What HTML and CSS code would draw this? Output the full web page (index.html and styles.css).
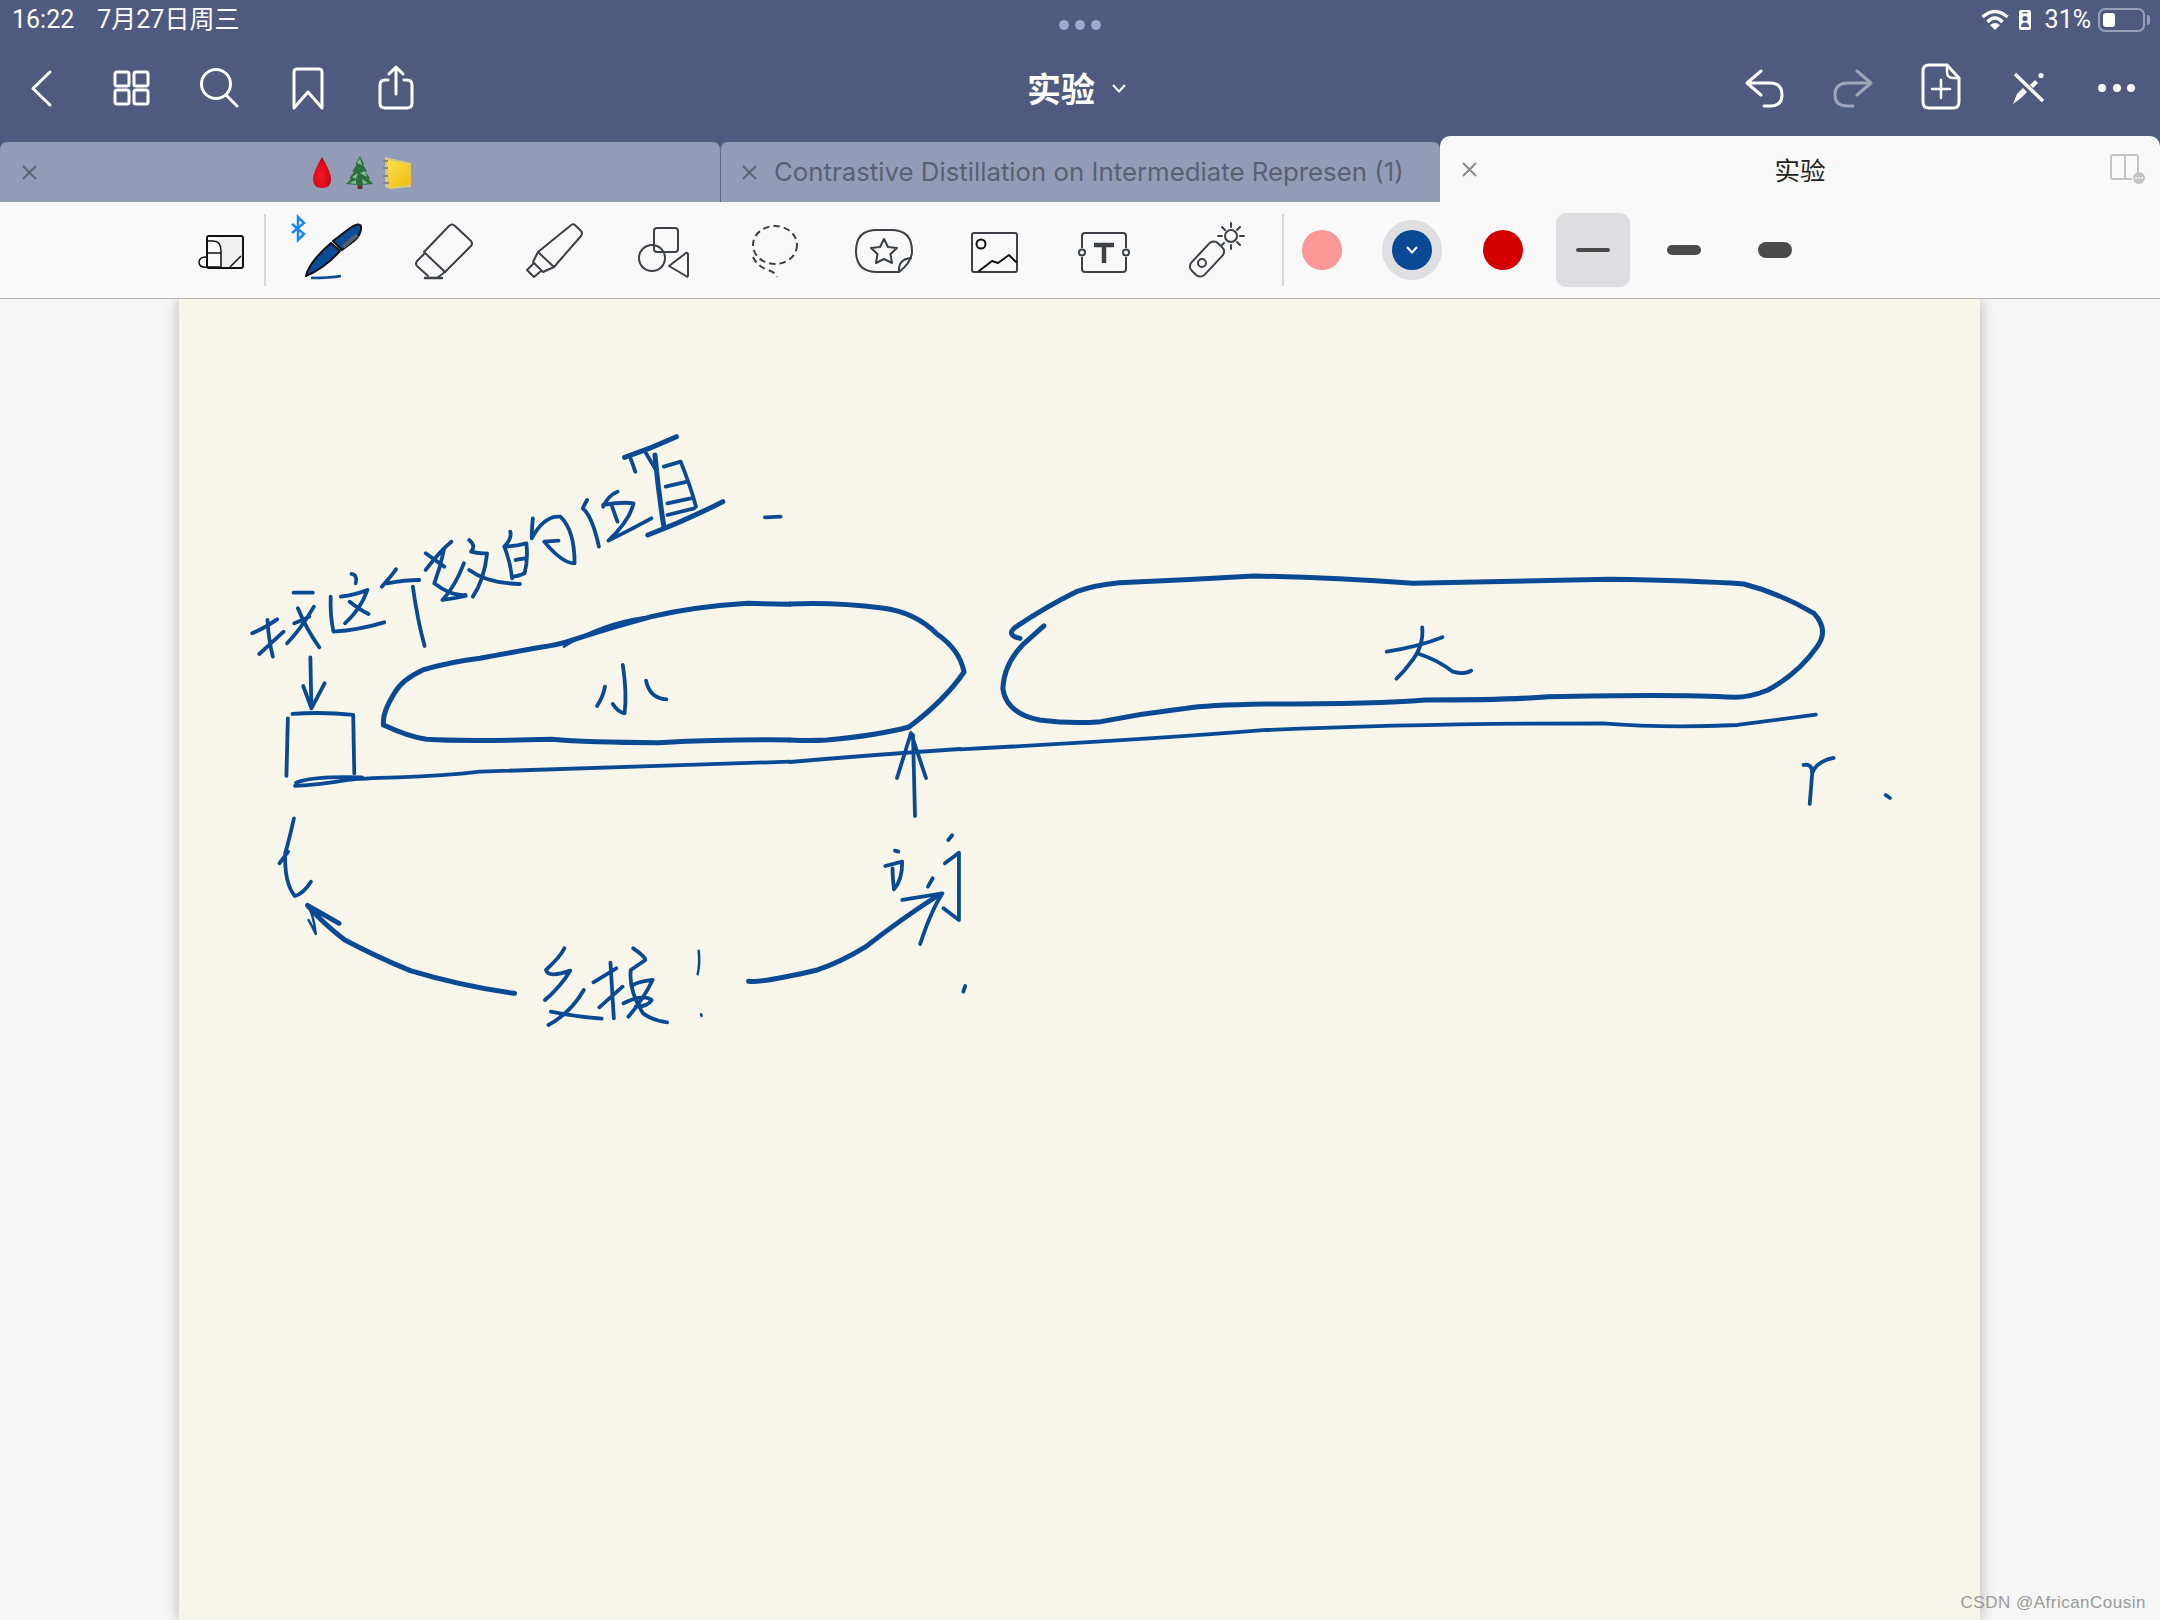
FILE: index.html
```html
<!DOCTYPE html>
<html lang="zh">
<head>
<meta charset="utf-8">
<title>实验</title>
<link rel="stylesheet" href="styles.css">
</head>
<body>
<div class="app">
  <header class="chrome">
    <div class="status">
      <div class="status-left"><span>16:22</span><span>7月27日周三</span></div>
      <div class="grip"><i></i><i></i><i></i></div>
      <div class="status-right">
        <svg class="st-wifi" viewBox="1979 8 28 24"><path d="M1980.500 17 Q1993 6 2005.500 17" /><path d="M1985.500 22 Q1993 14 2000.500 22" /><path d="M1993 30 L1988 25 Q1993 21 1998 25 Z" class="solid"/></svg>
        <svg class="st-phone" viewBox="2017 10 12 20"><rect x="2017" y="10" width="12" height="20" rx="2" fill="#fff"/><rect x="2020.500" y="12" width="5" height="1.400" fill="#4e5b7f"/><circle cx="2023" cy="18.500" r="2.600" fill="#4e5b7f"/><path d="M2019 27 Q2019 22.500 2023 22.500 Q2027 22.500 2027 27 Z" fill="#4e5b7f"/></svg>
        <span class="pct">31%</span>
        <div class="battery"><div class="battery-fill"></div></div>
      </div>
    </div>
    <div class="nav">
      <div class="nav-group">
        <svg class="nav-icon" viewBox="22 64 44 48"><path d="M50 72 L33 88.500 L50 105"/></svg>
        <svg class="nav-icon" viewBox="110 64 44 48"><rect x="115" y="72" width="14" height="14" rx="2"/><rect x="134" y="72" width="14" height="14" rx="2"/><rect x="115" y="90" width="14" height="14" rx="2"/><rect x="134" y="90" width="14" height="14" rx="2"/></svg>
        <svg class="nav-icon" viewBox="198 64 44 48"><circle cx="216" cy="84" r="14.500"/><path d="M226 95 L237 106"/></svg>
        <svg class="nav-icon" viewBox="286 64 44 48"><path d="M294 72 Q294 69 297 69 H319 Q322 69 322 72 V108 L308 92 L294 108 Z"/></svg>
        <svg class="nav-icon" viewBox="374 64 44 48"><path d="M388 80 H385 Q380 80 380 85 V103 Q380 108 385 108 H407 Q412 108 412 103 V85 Q412 80 407 80 H404"/><path d="M396 94 V67 M389 74 L396 67 L403 74"/></svg>
      </div>
      <div class="doc-title"><span>实验</span><svg class="title-chevron" viewBox="0 0 14 9"><path d="M1 1 L7 7.500 L13 1"/></svg></div>
      <div class="nav-group nav-group-right">
        <svg class="nav-icon" viewBox="1743 64 44 48"><path d="M1761 71 L1747 83 L1761 95 M1747 83 H1770 Q1782 83 1782 95 Q1782 106 1770 106 H1764"/></svg>
        <svg class="nav-icon nav-icon-off" viewBox="1831 64 44 48"><path d="M1857 71 L1871 83 L1857 95 M1871 83 H1848 Q1835 83 1835 95 Q1835 106 1848 106 H1853"/></svg>
        <svg class="nav-icon" viewBox="1919 64 44 48"><path d="M1929 65 H1947 L1959 78 V102 Q1959 108 1953 108 H1929 Q1923 108 1923 102 V71 Q1923 65 1929 65 Z"/><path d="M1947 65 V72 Q1947 78 1953 78 H1959 M1932 89 H1950 M1941 80 V98" class="fine"/></svg>
        <svg class="nav-icon" viewBox="2007 64 44 48"><path d="M2015 74 L2043 101" class="bold"/><path d="M2013 104 L2017 94 L2023 88 L2027 92 L2021 98 Z" class="solid"/><path d="M2030 85 L2035 80 L2038 83 L2033 88 Z" class="solid"/><circle cx="2041" cy="75.500" r="2.600" class="solid"/></svg>
        <svg class="nav-icon" viewBox="2095 64 44 48"><circle cx="2102" cy="88" r="4" class="solid"/><circle cx="2117" cy="88" r="4" class="solid"/><circle cx="2131" cy="88" r="4" class="solid"/></svg>
      </div>
    </div>
    <div class="tabs">
      <div class="tab">
        <svg class="tab-x" viewBox="0 0 15 15"><path d="M1 1 L14 14 M14 1 L1 14"/></svg>
        <div class="tab-label tab-label-center tab-label-emoji">
          <svg class="emoji" viewBox="312 155 100 33">
            <defs>
              <radialGradient id="dropfill" cx=".45" cy=".6" r=".6"><stop offset="0" stop-color="#ef1a24"/><stop offset=".75" stop-color="#d90a14"/><stop offset="1" stop-color="#9e0008"/></radialGradient>
              <linearGradient id="notefill" x1="0" y1="0" x2="1" y2="1"><stop offset="0" stop-color="#fde44e"/><stop offset="1" stop-color="#efb90e"/></linearGradient>
            </defs>
            <path d="M322 156 Q331 171 331 178 Q331 187 322 187 Q313 187 313 178 Q313 171 322 156 Z" fill="url(#dropfill)"/>
            <rect x="357.500" y="182" width="5" height="6" fill="#5e3f22"/>
            <path d="M360 155 L364 163 L363 164 L367 170 L365.500 171 L370 177 L368.500 178 L373 183 L362 184 H358 L346 183 L351 178 L349.500 177 L354 171 L352.500 170 L356.500 164 L355.500 163 Z" fill="#2c6e3e"/>
            <path d="M360 157 L362 164 L357 162 Z M365 170 L367 176 L360 172 Z M352 176 L358 172 L356 178 Z M368 182 L362 178 L363 183 Z M349 182 L356 179 L356 183 Z" fill="#86b992"/>
            <path d="M385 156 L411 162 V186 L390 188 L385 186 Z" fill="#d8c87a"/>
            <path d="M387 159 L410 163 L411 183 L390 187 Z" fill="url(#notefill)"/>
            <path d="M383 160 H388 M383 167 H388 M383 175 H388 M383 182 H389" stroke="#8a8a74" stroke-width="2" fill="none"/>
          </svg>
        </div>
      </div>
      <div class="tab tab-divided">
        <svg class="tab-x" viewBox="0 0 15 15"><path d="M1 1 L14 14 M14 1 L1 14"/></svg>
        <div class="tab-label tab-label-text">Contrastive Distillation on Intermediate Represen (1)</div>
      </div>
      <div class="tab tab-active">
        <svg class="tab-x" viewBox="0 0 15 15"><path d="M1 1 L14 14 M14 1 L1 14"/></svg>
        <div class="tab-label tab-label-center tab-label-active">实验</div>
        <svg class="tab-split" viewBox="2110 155 35 30">
          <path d="M2138 174 V158 Q2138 156 2136 156 H2113 Q2111 156 2111 158 V178 Q2111 180 2113 180 H2132 M2125 156 V180" fill="none" stroke="#c4c4c6" stroke-width="2"/>
          <circle cx="2139" cy="179" r="6" fill="#c4c4c6"/>
          <circle cx="2136" cy="179" r="1" fill="#f9f9f9"/><circle cx="2139" cy="179" r="1" fill="#f9f9f9"/><circle cx="2142" cy="179" r="1" fill="#f9f9f9"/>
        </svg>
      </div>
    </div>
    <div class="toolbar">
      <svg class="tool tool-layers" viewBox="204 215 40 70">
        <rect x="207" y="236" width="36" height="32" rx="2" fill="#f0f0f0" stroke="#111" stroke-width="2"/>
        <path d="M208 237 H214 Q221 238 221 250 V267 H208 Z" fill="#fafafa"/>
        <path d="M230 267 L241 256 M221 268 V251 Q221 241 213 241 H207 M206 253 H221 M207 257 Q199 257 199 262 Q199 268 207 267 H221" fill="none" stroke="#111" stroke-width="1.500"/>
      </svg>
      <span class="tool-sep tool-sep-first"></span>
      <svg class="tool tool-pen" viewBox="298 215 70 70">
        <path d="M292 224 L304 234 L298 240 V217 L304 223 L292 233" fill="none" stroke="#1a84ff" stroke-width="2.500"/>
        <path d="M306 276 Q309 262 331 243 L340 251 Q325 268 306 276 Z" fill="#0a4a96" stroke="#111" stroke-width="2" stroke-linejoin="round"/>
        <path d="M333 241 L350 228 Q359 222 361 226 Q362 234 354 241 L342 250 Z" fill="#0a4a96" stroke="#111" stroke-width="2" stroke-linejoin="round"/>
        <path d="M343 247 L357 235" stroke="#56606c" stroke-width="4" fill="none"/>
        <path d="M311 278 Q330 278 341 276" stroke="#0a4a96" stroke-width="2.500" fill="none"/>
      </svg>
      <svg class="tool tool-line" viewBox="408 215 70 70">
        <path d="M424 252 L449 226 Q452 223 455 226 L471 241 Q473 244 471 246 L445 272 Z"/>
        <path d="M424 254 L417 261 Q415 264 417 266 L428 276 M445 272 L437 278"/>
        <path d="M425 278 H442" stroke-width="2.500"/>
      </svg>
      <svg class="tool tool-line" viewBox="518 215 70 70">
        <path d="M538 252 L570 226 Q573 223 575 225 L581 231 Q583 233 581 236 L554 267 Z"/>
        <path d="M538 252 L533 262 L543 272 L554 267 M533 264 L527 270 L534 277 L541 271"/>
      </svg>
      <svg class="tool tool-line" viewBox="628 215 70 70">
        <rect x="654" y="228" width="24" height="24" rx="3"/>
        <circle cx="652" cy="258" r="13"/>
        <path d="M669 266 L686 253 Q688 252 688 255 V275 Q688 278 686 276 Z"/>
      </svg>
      <svg class="tool tool-line tool-butt" viewBox="738 215 70 70">
        <ellipse cx="775" cy="245" rx="22" ry="19" stroke-dasharray="6.500 4"/>
        <path d="M753 257 Q757 266 768 270 Q775 272 777 277" stroke-dasharray="6.500 4"/>
      </svg>
      <svg class="tool tool-line" viewBox="848 215 70 70">
        <path d="M877 230 H891 Q912 230 912 251 Q912 262 899 272 H877 Q856 272 856 251 Q856 230 877 230 Z"/>
        <path d="M899 272 Q898 259 911 258"/>
        <path d="M884 239 L888 247 L897 248 L890.500 254 L892 263 L884 259 L876 263 L877.500 254 L871 248 L880 247 Z"/>
      </svg>
      <svg class="tool tool-line" viewBox="958 215 70 70">
        <rect x="972" y="233" width="45" height="39" rx="2"/>
        <circle cx="981" cy="244" r="4.500" stroke="#111"/>
        <path d="M979 271 L992 261 L998 263 L1009 255 L1016 262" stroke="#111"/>
      </svg>
      <svg class="tool tool-line tool-butt" viewBox="1068 215 70 70">
        <path d="M1082 248 V236 Q1082 233 1085 233 H1123 Q1126 233 1126 236 V248 M1082 257 V269 Q1082 272 1085 272 H1123 Q1126 272 1126 269 V257"/>
        <circle cx="1082" cy="252.500" r="3"/>
        <circle cx="1126" cy="252.500" r="3"/>
        <path d="M1094 245 H1114 M1104 245 V263" stroke-width="4.500"/>
      </svg>
      <svg class="tool tool-line" viewBox="1178 215 70 70">
        <rect x="1188" y="250" width="38" height="18" rx="6" transform="rotate(-47 1207 259)"/>
        <circle cx="1202" cy="263" r="4"/>
        <circle cx="1231" cy="236" r="6"/>
        <path d="M1231 223 V227 M1231 245 V249 M1218 236 H1222 M1240 236 H1244 M1222 227 L1225 230 M1237 230 L1240 227 M1237 242 L1240 245 M1222 245 L1224 243"/>
      </svg>
      <span class="tool-sep tool-sep-second"></span>
      <div class="swatch"><span class="dot dot-pink"></span></div>
      <div class="swatch swatch-current">
        <span class="dot dot-navy"><svg class="dot-chevron" viewBox="0 0 12 8"><path d="M1 1 L6 6.500 L11 1"/></svg></span>
      </div>
      <div class="swatch"><span class="dot dot-red"></span></div>
      <div class="width-opts">
        <div class="width-opt width-opt-on"><span class="bar bar-s"></span></div>
        <div class="width-opt"><span class="bar bar-m"></span></div>
        <div class="width-opt"><span class="bar bar-l"></span></div>
      </div>
    </div>
  </header>
  <main class="canvas">
    <div class="paper">
      <svg class="ink" viewBox="179 299 1801 1321">
        <g transform="translate(230 420) scale(.3571 .3333)">
          <!-- 找 -->
          <path d="M62 640 Q95 625 132 598 M105 600 Q108 660 120 710 M82 702 Q115 670 150 635 M178 518 L232 518 M160 670 Q200 625 235 560 M180 610 Q205 600 222 590 M190 565 Q215 630 250 682"/>
          <!-- 这 -->
          <path d="M340 462 Q358 465 352 490 M282 530 Q280 590 290 635 Q360 630 432 607 M310 530 Q350 525 385 510 M322 610 Q365 570 385 510 M335 545 Q365 570 388 582"/>
          <!-- 个 -->
          <path d="M425 500 Q450 470 465 448 M440 490 Q490 480 530 480 M512 500 Q525 600 545 678"/>
          <!-- 数 -->
          <path d="M548 400 L600 440 M620 365 Q590 390 548 450 M578 410 L600 385 Q590 440 572 490 Q620 530 660 525 M655 430 Q630 500 595 540 Q630 535 660 528 M670 360 Q690 378 675 395 Q700 402 720 400 Q712 480 680 530 M670 450 Q720 490 812 492"/>
          <!-- 的 -->
          <path d="M785 335 Q790 355 768 380 Q785 425 790 475 M770 380 Q800 378 830 370 Q835 420 825 460 Q805 470 790 470 M800 420 L825 415 M848 295 Q845 330 845 355 Q880 285 925 290 Q965 330 965 430 Q930 430 880 365 L920 362"/>
          <!-- 位 -->
          <path d="M1000 240 Q992 255 988 265 Q1015 290 1033 380 M1045 260 Q1060 225 1085 215 M1070 260 L1085 305 M1045 255 Q1100 245 1130 250 Q1120 300 1060 362 Q1120 330 1180 295"/>
          <!-- 置 -->
          <path class="thick" d="M1105 112 Q1180 85 1250 50 M1190 105 Q1200 220 1215 320 M1170 345 Q1280 300 1380 245"/>
          <path d="M1120 110 L1135 155 M1165 100 L1190 145 M1215 140 L1262 125 Q1290 200 1305 260 M1220 200 L1280 185 M1225 250 L1290 235 M1225 285 L1300 265 M1498 292 L1542 290"/>
          <!-- box, arrow, 小 -->
          <path d="M162 895 L158 1068 M175 882 Q260 875 345 885 L348 1060 M185 1088 Q230 1068 370 1072"/>
          <path d="M225 712 L228 865 M205 798 L228 865 L265 790"/>
          <path d="M1100 735 Q1112 820 1105 880 Q1085 875 1072 852 M1050 800 Q1045 830 1028 858 M1165 782 Q1175 835 1222 838"/>
          <path class="fine" d="M1160 592 Q1040 610 935 680"/>
          <path class="thick" d="M430 915 Q425 880 460 820 Q480 780 540 750 Q620 725 700 715 Q800 695 870 682 Q920 675 960 660 Q1060 625 1180 590 Q1300 560 1450 550 L1568 553"/>
          <path class="thick" d="M430 915 Q500 950 550 958 Q650 965 900 958 Q1000 968 1200 968 Q1400 958 1568 960"/>
          <path d="M182 1098 Q250 1095 330 1080 Q360 1075 470 1072 Q600 1068 700 1055 Q1000 1045 1568 1025"/>
        </g>
        <path class="thick" d="M790 604 Q835 602 882 608 Q915 612 937 634 Q960 650 964 672 Q945 700 909 727 Q880 735 827 740 Q810 741 790 740"/>
        <path d="M790 762 Q870 755 960 749"/>
        <path d="M913 735 L915 816 M897 778 L911 733 L926 778"/>
        <g transform="translate(960 540) scale(.6122 .3333)">
          <path class="thick" d="M98 295 Q75 285 90 262 Q140 200 190 155 Q220 135 260 128 Q370 120 480 108 Q600 112 740 130 Q900 125 1060 118 Q1200 122 1280 132 Q1340 160 1395 220 Q1420 270 1400 320 Q1370 400 1320 450 Q1290 472 1265 472 Q1180 462 960 470 Q900 480 760 480 Q680 492 500 492 Q400 495 370 505 Q300 520 230 545 Q180 552 130 540 Q75 520 70 445 Q72 370 105 310 L137 258"/>
          <path d="M0 628 Q300 600 500 570 Q750 550 1050 550 Q1150 565 1270 555 L1398 524"/>
          <path d="M755 262 Q758 320 735 370 Q725 395 713 416 M697 335 Q750 320 788 292 M750 342 Q780 360 805 395 Q825 405 835 392"/>
          <path d="M1378 675 Q1392 670 1392 700 L1388 792 M1392 700 Q1398 665 1427 654 M1512 765 L1519 774"/>
        </g>
        <g transform="translate(260 780) scale(.4847 .3333)">
          <path d="M70 115 Q60 180 52 220 Q50 310 72 348 Q90 340 105 305 M40 250 L58 215"/>
          <path class="thick" d="M525 640 Q420 620 310 572 Q240 530 175 480 Q130 430 98 376 L163 430"/>
          <path class="fine" d="M98 376 Q110 400 115 462 Q108 440 100 420"/>
          <path d="M628 505 Q620 530 590 570 Q595 595 640 572 Q620 620 588 660 M600 695 Q650 710 705 716 M595 735 Q640 700 668 630"/>
          <path d="M688 607 L735 565 M723 548 L730 715 M700 682 L748 620 M770 505 Q795 530 795 540 L765 570 Q760 630 790 700 Q810 722 840 727 M760 710 Q790 660 810 600 Q780 605 770 615 M750 670 Q790 640 808 660 Q800 680 775 680"/>
          <path class="fine" d="M905 512 Q908 550 903 583 M910 703 L911 708"/>
          <path class="thick" d="M1008 604 Q1030 610 1150 570 Q1200 545 1250 500 Q1320 420 1400 345"/>
          <path d="M1325 360 L1408 340 Q1385 390 1362 492"/>
          <path d="M1310 212 L1317 215 M1290 258 L1325 245 Q1325 300 1308 328 Q1305 290 1305 265 M1428 166 L1420 180 M1413 250 L1442 218 L1442 420 L1410 385 M1388 295 L1378 320 M1455 618 L1451 635"/>
        </g>
      </svg>
    </div>
    <div class="watermark">CSDN @AfricanCousin</div>
  </main>
</div>
</body>
</html>
```
FILE: styles.css
```css
* { box-sizing: border-box; }
html, body { margin: 0; padding: 0; height: 100%; }
body { font-family: Inter, "Noto Sans CJK SC", sans-serif; background: #f6f6f6; overflow: hidden; }
svg { display: block; overflow: visible; flex: none; }

.app { height: 1620px; display: flex; flex-direction: column; }
.chrome { background: #4e5b7f; position: relative; z-index: 2; flex: none; }

.status { height: 40px; display: grid; grid-template-columns: 1fr auto 1fr; align-items: center; color: #fff; padding: 0 15px 0 12px; }
.status-left { display: flex; gap: 23px; font: 25px/40px Roboto, "Noto Sans CJK SC", sans-serif; }
.grip { display: flex; gap: 6px; padding-top: 10px; margin-right: -3px; }
.grip i { width: 10px; height: 10px; border-radius: 50%; background: #9aa9d2; }
.status-right { display: flex; justify-content: flex-end; align-items: center; }
.st-wifi { width: 28px; height: 24px; fill: none; stroke: #fff; stroke-width: 3.5; }
.st-wifi .solid { fill: #fff; stroke: none; }
.st-phone { width: 12px; height: 20px; margin-left: 10px; }
.pct { font: 25px/40px Roboto, sans-serif; margin-left: 14px; margin-right: 1px; }
.battery { width: 47px; height: 24px; margin-left: 6px; border: 2px solid #97a0b8; border-radius: 7px; padding: 3px; position: relative; }
.battery::after { content: ""; position: absolute; right: -7px; top: 5px; width: 3px; height: 10px; background: #97a0b8; border-radius: 0 3px 3px 0; }
.battery-fill { width: 12px; height: 100%; background: #fff; border-radius: 3px; }

.nav { height: 96px; display: grid; grid-template-columns: minmax(0, 1fr) auto minmax(0, 1fr); align-items: center; padding: 0 21px 0 22px; }
.nav-group { display: flex; gap: 44px; }
.nav-group-right { justify-content: flex-end; }
.nav-icon { width: 44px; height: 48px; fill: none; stroke: #fff; stroke-width: 3; stroke-linecap: round; stroke-linejoin: round; }
.nav-icon .solid { fill: #fff; stroke: none; }
.nav-icon .fine { stroke-width: 2.5; }
.nav-icon .bold { stroke-width: 3.5; stroke-linecap: butt; }
.nav-icon-off { stroke: #9ea6b8; }
.doc-title { display: flex; align-items: center; gap: 17px; padding-right: 8px; color: #fff; font: 700 34px/48px "Noto Sans CJK SC", sans-serif; }
.title-chevron { width: 14px; height: 9px; fill: none; stroke: #fff; stroke-width: 2; }

.tabs { height: 66px; display: flex; align-items: flex-end; }
.tab { flex: 0 0 720px; height: 60px; background: #939cb6; border-radius: 7px 7px 0 0; display: flex; align-items: center; padding-left: 22px; }
.tab-divided { border-left: 1px solid #5e6a8a; padding-left: 21px; }
.tab-active { height: 66px; background: #f9f9f9; border-radius: 10px 10px 0 0; padding-right: 15px; }
.tab-x { width: 15px; height: 15px; fill: none; stroke: #5f6577; stroke-width: 2; }
.tab-active .tab-x { stroke: #8a8a8c; }
.tab-label { flex: 1; min-width: 0; }
.tab-label-center { display: flex; justify-content: center; }
.tab-label-emoji { padding-right: 33px; }
.tab-label-text { margin-left: 17px; color: #5a6072; font-size: 25.800px; line-height: 40px; white-space: nowrap; }
.tab-label-active { color: #222; font: 25.500px/40px "Noto Sans CJK SC", sans-serif; padding-left: 13px; }
.emoji { width: 100px; height: 33px; }
.tab-split { width: 35px; height: 30px; }

.toolbar { height: 97px; background: #f9f9f9; border-bottom: 1px solid #b8b8b8; display: flex; align-items: center; padding-left: 204px; }
.tool { width: 70px; height: 70px; margin-right: 40px; }
.tool-layers { width: 40px; margin-right: 0; }
.tool-pen { margin-left: 0; }
.tool-line { fill: none; stroke: #3e3f47; stroke-width: 2; stroke-linejoin: round; stroke-linecap: round; }
.tool-butt { stroke-linecap: butt; }
.tool-sep { width: 2px; height: 72px; background: #d8d8d8; flex: none; }
.tool-sep-first { margin: 0 32px 0 20px; }
.tool-sep-second { margin: 0 8px 0 -6px; }
.swatch { width: 60px; height: 60px; margin-right: 30px; display: flex; align-items: center; justify-content: center; border-radius: 50%; flex: none; }
.swatch-current { background: #dfdfe2; margin-right: 31px; }
.dot { width: 40px; height: 40px; border-radius: 50%; display: flex; align-items: center; justify-content: center; }
.dot-pink { background: #fd9898; }
.dot-navy { background: #0a4a94; }
.dot-red { background: #d40000; }
.dot-chevron { width: 12px; height: 8px; fill: none; stroke: #fff; stroke-width: 2; }
.width-opts { display: flex; gap: 17px; margin-left: -7px; }
.width-opt { width: 74px; height: 74px; display: flex; align-items: center; justify-content: center; border-radius: 10px; }
.width-opt-on { background: #dedee0; }
.bar { width: 34px; background: #4a4a4a; border-radius: 8px; }
.bar-s { height: 4px; }
.bar-m { height: 10px; }
.bar-l { height: 16px; }

.canvas { flex: 1; min-height: 0; position: relative; overflow: hidden; display: flex; justify-content: center; }
.paper { width: 1801px; height: 100%; margin-left: -1px; background: #f8f6ea; box-shadow: 0 0 14px rgba(0, 0, 0, .28); }
.ink { width: 1801px; height: 1321px; }
.ink path { fill: none; stroke: #0a4a94; stroke-width: 3.8; stroke-linecap: round; stroke-linejoin: round; vector-effect: non-scaling-stroke; }
.ink path.thick { stroke-width: 5; }
.ink path.fine { stroke-width: 2.5; }
.watermark { position: absolute; right: 14px; bottom: 7px; font: 17px/20px "Liberation Sans", sans-serif; letter-spacing: .5px; color: #9a9a9a; }
```
